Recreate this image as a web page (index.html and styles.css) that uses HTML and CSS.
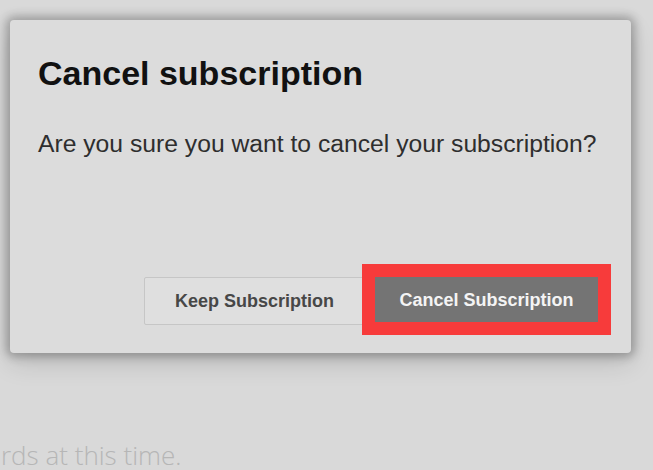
FILE: index.html
```html
<!DOCTYPE html>
<html lang="en">
<head>
<meta charset="utf-8">
<title>Cancel subscription</title>
<link rel="stylesheet" href="styles.css">
</head>
<body>
<div class="page">
  <div class="dialog" role="dialog" aria-labelledby="dlg-title">
    <h1 class="dialog-title" id="dlg-title">Cancel subscription</h1>
    <p class="dialog-text">Are you sure you want to cancel your subscription?</p>
    <div class="dialog-actions">
      <button class="btn btn-secondary" type="button">Keep Subscription</button>
      <button class="btn btn-primary btn-highlight" type="button">Cancel Subscription</button>
    </div>
  </div>
  <p class="page-text">rds at this time.</p>
</div>
</body>
</html>
```
FILE: styles.css
```css
html, body {
  margin: 0;
  padding: 0;
}
body {
  width: 653px;
  height: 470px;
  overflow: hidden;
  background: #d9d9d9;
  font-family: "Liberation Sans", Arial, sans-serif;
}
.page {
  padding: 20px 0 0 10px;
}
.dialog {
  box-sizing: border-box;
  width: 621px;
  height: 333px;
  background: #dcdcdc;
  border-radius: 4px;
  box-shadow: 0 0 10px 4px rgba(0, 0, 0, 0.25), 0 10px 26px rgba(0, 0, 0, 0.14);
  padding: 36px 33px 0 28px;
  display: flex;
  flex-direction: column;
}
.dialog-title {
  margin: 0;
  font-size: 34px;
  line-height: 34px;
  font-weight: 700;
  color: #111111;
}
.dialog-text {
  margin: 42px 0 0 0;
  font-size: 24.7px;
  line-height: 24.7px;
  color: #2e2e2e;
}
.dialog-actions {
  margin-top: auto;
  margin-bottom: 28px;
  display: flex;
  justify-content: flex-end;
  align-items: flex-start;
  gap: 10px;
}
.btn {
  font-family: "Liberation Sans", Arial, sans-serif;
  font-weight: 700;
  font-size: 18px;
  line-height: 20px;
  border-radius: 2px;
  cursor: pointer;
  margin: 0;
}
.btn-secondary {
  box-sizing: border-box;
  width: 221px;
  height: 48px;
  background: #dfdfdf;
  border: 1px solid #c6c6c6;
  color: #474747;
}
.btn-primary {
  box-sizing: border-box;
  width: 223px;
  height: 45px;
  background: #747474;
  border: none;
  border-radius: 0;
  color: #f4f4f4;
}
.btn-highlight {
  outline: 13px solid #f73b3b;
}
.page-text {
  margin: 89px 0 0 -9px;
  font-family: "Open Sans", sans-serif;
  font-weight: 300;
  font-size: 26px;
  line-height: 26px;
  color: #b6b6b6;
}
```
